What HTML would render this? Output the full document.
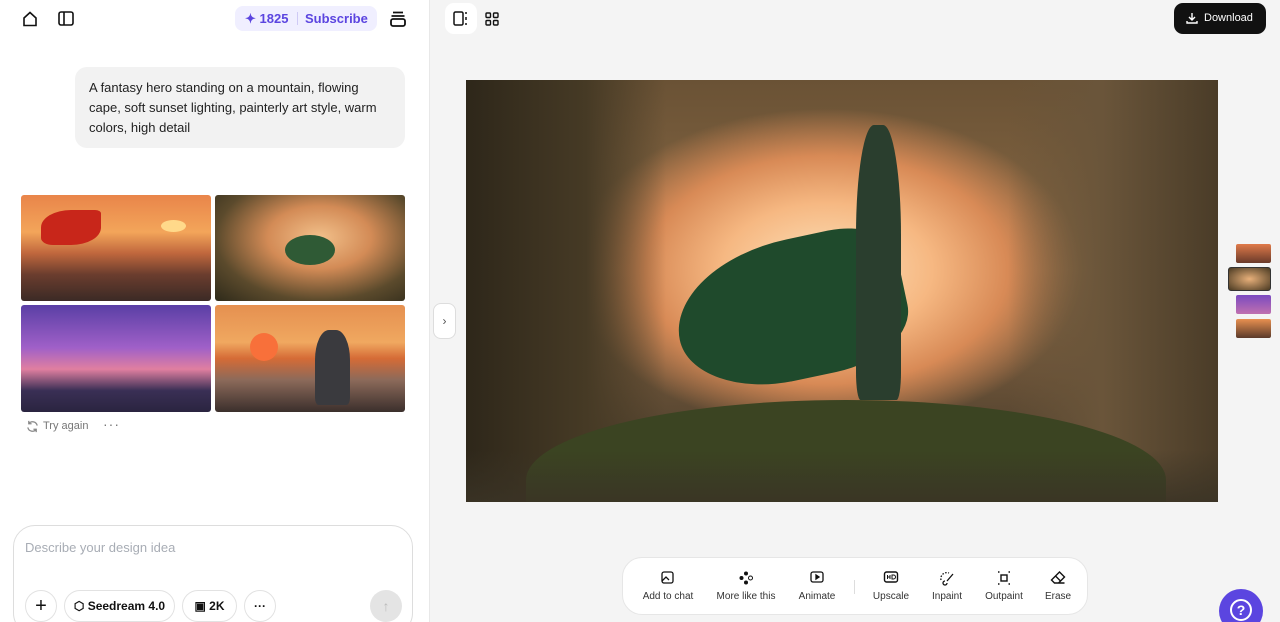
<!DOCTYPE html>
<html><head><meta charset="utf-8"><style>
*{box-sizing:border-box;margin:0;padding:0}
html,body{width:1280px;height:622px;overflow:hidden}
body{font-family:"Liberation Sans",sans-serif;background:#fff;position:relative;color:#111}
.left{position:absolute;left:0;top:0;width:430px;height:622px;background:#fff;border-right:1px solid #e8e8e8;overflow:hidden}
.right{position:absolute;left:430px;top:0;width:850px;height:622px;background:#f4f4f4;overflow:hidden}
.ic{position:absolute}
.pill{position:absolute;left:235px;top:6px;width:142px;height:25px;background:#f0efff;border-radius:8px;color:#5b45e0;font-weight:bold;font-size:13px;line-height:25px}
.bubble{position:absolute;left:75px;top:67px;width:330px;height:81px;background:#f2f2f2;border-radius:12px;padding:11px 14px;font-size:13px;line-height:20px;color:#222}
.th{position:absolute;border-radius:3px;overflow:hidden}
.input{position:absolute;left:13px;top:525px;width:400px;height:110px;border:1px solid #ddd;border-radius:22px;background:#fff}
.btn{position:absolute;top:590px;height:32px;border:1px solid #e2e2e2;border-radius:16px;font-size:12px;font-weight:bold;line-height:30px;text-align:center;background:#fff}
.toolbar{position:absolute;left:622px;top:557px;width:466px;height:58px;background:#fff;border:1px solid #e6e6e6;border-radius:20px}
.tool{position:absolute;top:33px;font-size:10px;color:#333;transform:translateX(-50%);white-space:nowrap}
.ticon{position:absolute;top:13px;transform:translateX(-50%)}
</style></head><body>
<div class="left">
<svg class="ic" style="left:21px;top:10px" width="18" height="18" viewBox="0 0 18 18" fill="none" stroke="#111" stroke-width="1.6"><path d="M3 8L9 2.5 15 8V15.5H3Z"/></svg>
<svg class="ic" style="left:58px;top:11px" width="16" height="15" viewBox="0 0 16 15" fill="none" stroke="#111" stroke-width="1.6"><rect x="1" y="1" width="14" height="13" rx="2"/><path d="M6 1V14"/></svg>
<div class="pill"><span style="position:absolute;left:10px">✦ 1825</span><span style="position:absolute;left:62px;top:6px;width:1px;height:13px;background:#cfcaf5"></span><span style="position:absolute;left:70px">Subscribe</span></div>
<svg class="ic" style="left:389px;top:10px" width="18" height="18" viewBox="0 0 18 18" fill="none" stroke="#111" stroke-width="1.8"><path d="M4 2.5H14M2.5 6H15.5"/><rect x="2" y="9" width="14" height="7" rx="2"/></svg>
<div class="bubble">A fantasy hero standing on a mountain, flowing cape, soft sunset lighting, painterly art style, warm colors, high detail</div>
<div class="th" style="left:21px;top:195px;width:190px;height:106px;background:linear-gradient(180deg,#e9854a 0%,#f3a55a 35%,#c0673d 55%,#6b3d2e 75%,#3b2a25 100%)"><div style="position:absolute;left:20px;top:15px;width:60px;height:35px;background:#c8261a;border-radius:50% 10% 50% 20%"></div><div style="position:absolute;left:140px;top:25px;width:25px;height:12px;background:#ffd98a;border-radius:50%"></div></div>
<div class="th" style="left:215px;top:195px;width:190px;height:106px;background:radial-gradient(ellipse at 55% 40%,#f2c08a 0%,#d38b56 35%,#5b4a2c 70%,#2e2a1a 100%)"><div style="position:absolute;left:70px;top:40px;width:50px;height:30px;background:#2f5a35;border-radius:50%"></div></div>
<div class="th" style="left:21px;top:305px;width:190px;height:107px;background:linear-gradient(180deg,#5a3fa5 0%,#a060c8 40%,#e07fa0 60%,#3a2f55 80%,#2a2440 100%)"></div>
<div class="th" style="left:215px;top:305px;width:190px;height:107px;background:linear-gradient(180deg,#e59050 0%,#f0a860 35%,#d56b36 50%,#8c6a5a 70%,#3b2f2c 100%)"><div style="position:absolute;left:35px;top:28px;width:28px;height:28px;background:#f8703a;border-radius:50%"></div><div style="position:absolute;left:100px;top:25px;width:35px;height:75px;background:#3a3a3e;border-radius:40% 40% 10% 10%"></div></div>
<svg class="ic" style="left:26px;top:420px" width="13" height="13" viewBox="0 0 14 14" fill="none" stroke="#888" stroke-width="1.4"><path d="M12 6A5 5 0 0 0 3 4M2 8a5 5 0 0 0 9 2M3 1V4H6M11 13V10H8"/></svg>
<div style="position:absolute;left:43px;top:420px;font-size:11px;color:#777">Try again</div>
<div style="position:absolute;left:103px;top:416px;font-size:14px;color:#777;letter-spacing:1px">···</div>
<div class="input"><div style="position:absolute;left:11px;top:14px;font-size:13px;color:#a8adb5">Describe your design idea</div></div>
<div class="btn" style="left:25px;width:32px;font-size:20px;font-weight:normal">+</div>
<div class="btn" style="left:64px;width:111px">⬡ Seedream 4.0</div>
<div class="btn" style="left:182px;width:55px">▣ 2K</div>
<div class="btn" style="left:244px;width:32px">···</div>
<div style="position:absolute;left:370px;top:590px;width:32px;height:32px;border-radius:50%;background:#e4e4e4;color:#bbb;text-align:center;line-height:32px;font-size:14px">↑</div>
</div>
<div class="right">
<div style="position:absolute;left:15px;top:3px;width:32px;height:31px;background:#fff;border-radius:9px"></div>
<svg class="ic" style="left:23px;top:11px" width="16" height="15" viewBox="0 0 16 15" fill="none" stroke="#111" stroke-width="1.5"><rect x="1" y="1" width="9" height="13" rx="1.5"/><path d="M13 1v2M13 6v3M13 12v2"/></svg>
<svg class="ic" style="left:55px;top:12px" width="14" height="14" viewBox="0 0 14 14" fill="none" stroke="#111" stroke-width="1.4"><rect x="1" y="1" width="4.5" height="4.5" rx="1"/><rect x="8.5" y="1" width="4.5" height="4.5" rx="1"/><rect x="1" y="8.5" width="4.5" height="4.5" rx="1"/><rect x="8.5" y="8.5" width="4.5" height="4.5" rx="1"/></svg>
<div style="position:absolute;left:744px;top:3px;width:92px;height:31px;background:#111;border-radius:9px;color:#fff;font-size:11px;line-height:31px;padding-left:30px">Download</div>
<svg class="ic" style="left:756px;top:12px" width="12" height="12" viewBox="0 0 12 12" fill="none" stroke="#fff" stroke-width="1.4"><path d="M6 1V8M3 5l3 3 3-3M1 9v2h10V9"/></svg>
<div style="position:absolute;left:3px;top:303px;width:23px;height:36px;background:#fff;border:1px solid #ddd;border-radius:8px;text-align:center;line-height:34px;font-size:12px;color:#555">›</div>
<div style="position:absolute;left:36px;top:80px;width:752px;height:422px;overflow:hidden;background:radial-gradient(ellipse 40% 45% at 48% 45%,#fce2bc 0%,#f6b882 35%,#d88a56 60%,rgba(140,95,55,0) 85%),linear-gradient(180deg,#6a5235 0%,#8a6a45 45%,#6a5238 70%,#3a3325 100%)">
<div style="position:absolute;left:0;top:0;width:200px;height:422px;background:linear-gradient(90deg,#2e271a,#463a25 60%,rgba(80,65,40,0))"></div>
<div style="position:absolute;right:0;top:0;width:210px;height:422px;background:linear-gradient(270deg,#4a3c28,#6a553a 55%,rgba(90,70,45,0))"></div>
<div style="position:absolute;left:60px;top:320px;width:640px;height:160px;background:#3b4422;border-radius:50% 50% 0 0"></div>
<div style="position:absolute;left:0;top:370px;width:752px;height:60px;background:linear-gradient(180deg,rgba(50,45,30,0),#3a3325)"></div>
<div style="position:absolute;left:210px;top:160px;width:230px;height:140px;background:#1f4a2c;border-radius:60% 30% 40% 50%;transform:rotate(-12deg)"></div>
<div style="position:absolute;left:390px;top:45px;width:45px;height:275px;background:#2a3e2e;border-radius:40% 40% 10% 10%"></div>
</div>
<div style="position:absolute;left:806px;top:244px;width:35px;height:19px;background:linear-gradient(#e07a4a,#6a3a2a);border-radius:2px"></div>
<div style="position:absolute;left:798px;top:267px;width:43px;height:24px;background:radial-gradient(#e8b07a,#4a3a22);border:1.5px solid #333;border-radius:3px"></div>
<div style="position:absolute;left:806px;top:295px;width:35px;height:19px;background:linear-gradient(#7a4ac0,#c070b0);border-radius:2px"></div>
<div style="position:absolute;left:806px;top:319px;width:35px;height:19px;background:linear-gradient(#e89050,#5a3a2a);border-radius:2px"></div>
<div style="position:absolute;left:789px;top:589px;width:44px;height:44px;border-radius:50%;background:#5b45e0;color:#fff;text-align:center;line-height:40px;font-size:20px;font-weight:bold"><span style="display:inline-block;width:22px;height:22px;border:2px solid #fff;border-radius:50%;line-height:18px;font-size:14px;margin-top:10px">?</span></div>
</div>
<div class="toolbar">
<svg class="ticon" style="left:45px" width="14" height="14" viewBox="0 0 14 14" fill="none" stroke="#111" stroke-width="1.3"><rect x="1" y="1" width="11" height="11" rx="2"/><path d="M1 10l4-4 3 3"/></svg><div class="tool" style="left:45px">Add to chat</div>
<svg class="ticon" style="left:123px" width="14" height="14" viewBox="0 0 14 14" fill="#111"><circle cx="7" cy="2.5" r="2"/><circle cx="2.5" cy="7" r="2"/><circle cx="11.5" cy="7" r="2" fill="none" stroke="#111"/><circle cx="7" cy="11.5" r="2"/></svg><div class="tool" style="left:123px">More like this</div>
<svg class="ticon" style="left:194px" width="14" height="14" viewBox="0 0 14 14" fill="none" stroke="#111" stroke-width="1.3"><rect x="1" y="1" width="12" height="10" rx="2"/><path d="M6 4v4l3-2z" fill="#111"/></svg><div class="tool" style="left:194px">Animate</div>
<div style="position:absolute;left:231px;top:22px;width:1px;height:14px;background:#ddd"></div>
<svg class="ticon" style="left:268px" width="15" height="12" viewBox="0 0 15 12" fill="none" stroke="#111" stroke-width="1.4"><rect x="1" y="1" width="13" height="10" rx="2"/><path d="M4 4v4M4 6h2.5M6.5 4v4M8.5 4v4h1.5a2 2 0 000-4z" stroke-width="1"/></svg><div class="tool" style="left:268px">Upscale</div>
<svg class="ticon" style="left:324px" width="16" height="15" viewBox="0 0 16 15" fill="none" stroke="#111" stroke-width="1.3"><path d="M2 9A6 6 0 0 1 10 2" stroke-dasharray="1.5 1.5"/><path d="M14 3L8 10M6 10a2 2 0 1 0 2 2"/></svg><div class="tool" style="left:324px">Inpaint</div>
<svg class="ticon" style="left:381px" width="14" height="14" viewBox="0 0 14 14" fill="none" stroke="#111" stroke-width="1.4"><rect x="4" y="4" width="6" height="6"/><path d="M1 1h1.5M11.5 1H13M1 13h1.5M11.5 13H13"/></svg><div class="tool" style="left:381px">Outpaint</div>
<svg class="ticon" style="left:435px" width="15" height="13" viewBox="0 0 15 13" fill="none" stroke="#111" stroke-width="1.4"><path d="M9 1l5 5-6 6H4L1 9z M5 5l5 5M4 12h10"/></svg><div class="tool" style="left:435px">Erase</div>
</div>
</body></html>
